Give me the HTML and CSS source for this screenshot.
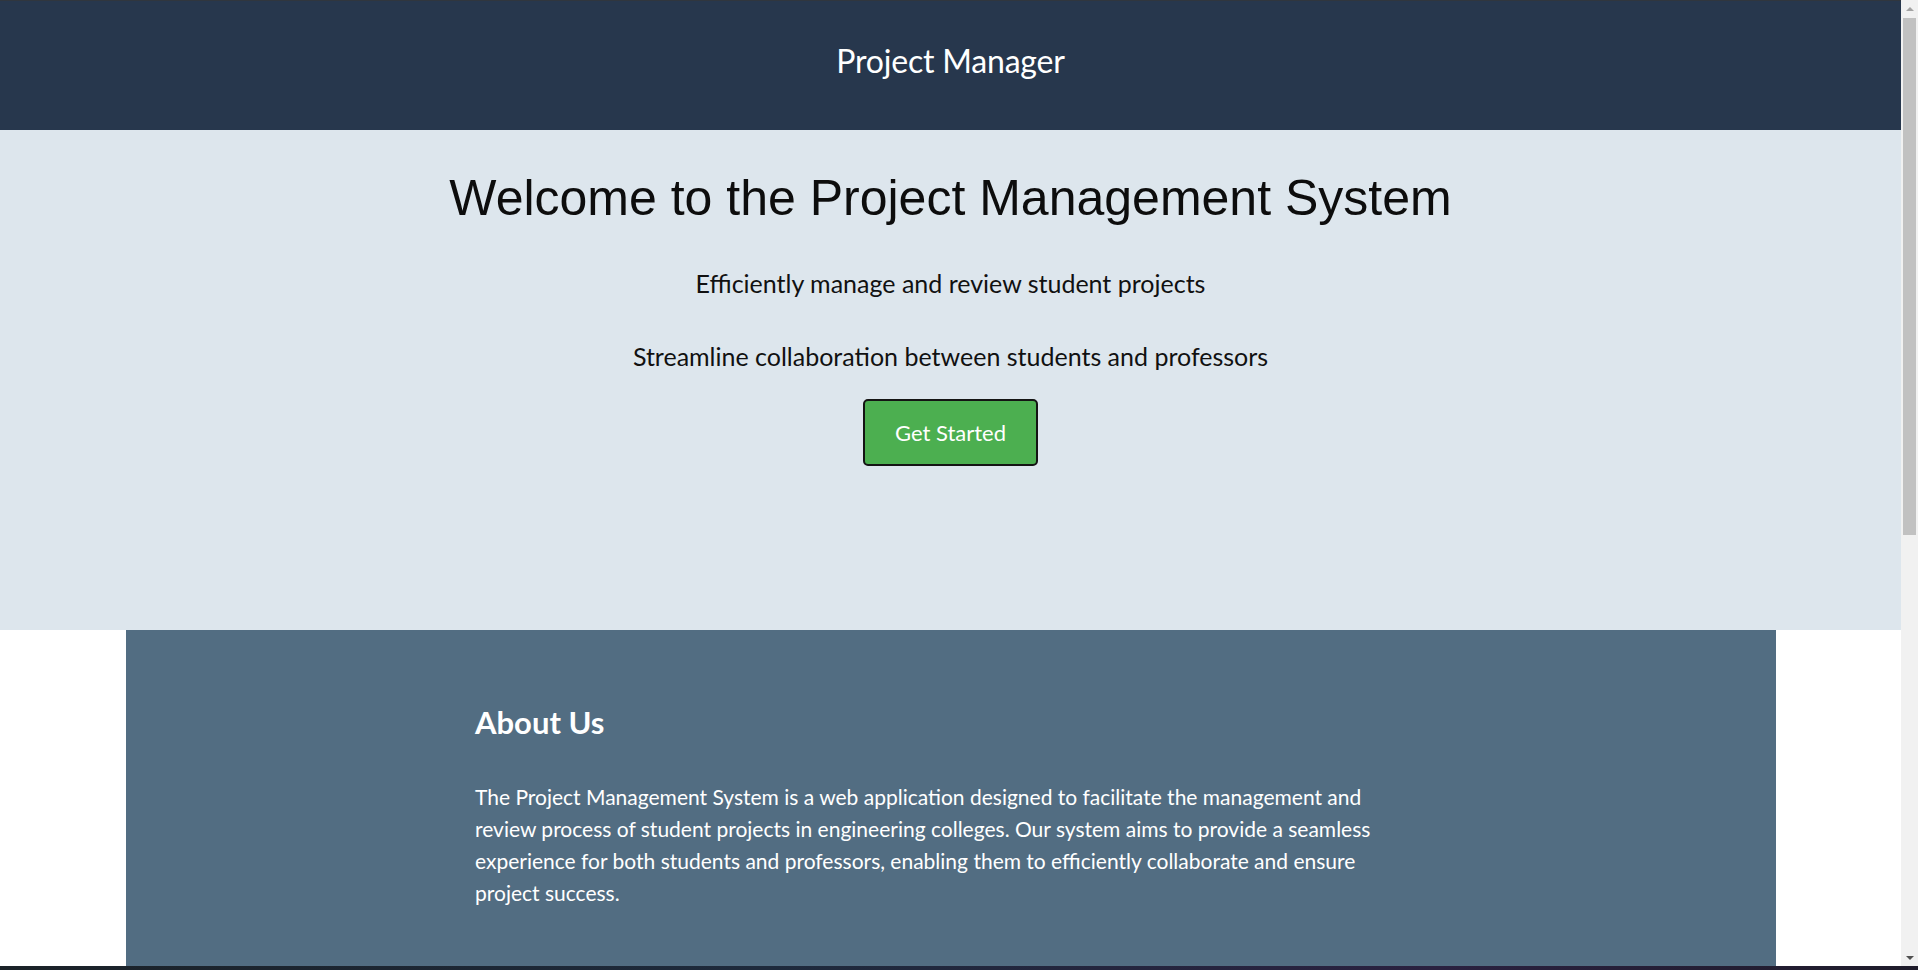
FILE: index.html
```html
<!DOCTYPE html>
<html lang="en">
<head>
<meta charset="utf-8">
<title>Project Manager</title>
<link rel="stylesheet" href="styles.css">
</head>
<body>
<div class="page">
  <header class="site-header">
    <h1 class="brand">Project Manager</h1>
  </header>
  <section class="hero">
    <h2 class="hero-title">Welcome to the Project Management System</h2>
    <p class="hero-text">Efficiently manage and review student projects</p>
    <p class="hero-text">Streamline collaboration between students and professors</p>
    <button class="btn-start" type="button">Get Started</button>
  </section>
  <section class="about">
    <div class="about-inner">
      <h2 class="about-title">About Us</h2>
      <p class="about-text">The Project Management System is a web application designed to facilitate the management and review process of student projects in engineering colleges. Our system aims to provide a seamless experience for both students and professors, enabling them to efficiently collaborate and ensure project success.</p>
    </div>
  </section>
</div>
<div class="scrollbar" aria-hidden="true">
  <span class="sb-button"><span class="sb-arrow-up"></span></span>
  <span class="sb-thumb"></span>
  <span class="sb-button sb-button-end"><span class="sb-arrow-down"></span></span>
</div>
<div class="taskbar-edge" aria-hidden="true"></div>
</body>
</html>
```
FILE: styles.css
```css
html, body {
  margin: 0;
  padding: 0;
}

body {
  margin-right: 17px;
  background: #ffffff;
  font-family: Lato, "Open Sans", sans-serif;
  color: #111111;
}

.page {
  min-height: 1735px;
}

.site-header {
  box-sizing: border-box;
  height: 130px;
  padding-top: 41px;
  background: #27374d;
  border-top: 1px solid #30363e;
  text-align: center;
}

.brand {
  margin: 0;
  font-family: Lato, sans-serif;
  font-weight: 400;
  font-size: 32px;
  line-height: 38px;
  color: #ffffff;
  letter-spacing: -0.2px;
}

.hero {
  box-sizing: border-box;
  height: 500px;
  padding-top: 39px;
  background: #dde6ed;
  text-align: center;
}

.hero-title {
  margin: 0 0 40px;
  font-family: "Liberation Sans", Arial, sans-serif;
  font-weight: 400;
  font-size: 50px;
  line-height: normal;
  color: #0d0d0d;
}

.hero-text {
  margin: 0;
  font-size: 25px;
  line-height: 32px;
  color: #111111;
}

.hero-text + .hero-text {
  margin-top: 41px;
}

.btn-start {
  display: block;
  box-sizing: border-box;
  height: 67px;
  margin: 27px auto 0;
  padding: 0 30px;
  background: #4caf50;
  border: 2px solid #141414;
  border-radius: 5px;
  color: #ffffff;
  font-family: Lato, sans-serif;
  font-size: 22px;
  cursor: pointer;
}

.about {
  max-width: 1650px;
  margin: 0 auto;
  padding: 74px 0 120px;
  background: #526d82;
  color: #ffffff;
  min-height: 700px;
  box-sizing: border-box;
}

.about-inner {
  max-width: 951px;
  margin: 0 auto;
}

.about-title {
  margin: 0 0 40px;
  font-size: 31px;
  font-weight: 700;
  line-height: 1.2;
}

.about-text {
  max-width: 925px;
  margin: 0;
  font-size: 21px;
  line-height: 32px;
}

/* browser chrome overlay: classic vertical scrollbar */
.scrollbar {
  position: fixed;
  top: 0;
  right: 0;
  width: 17px;
  height: calc(100vh - 4px);
  background: #f1f1f1;
  display: flex;
  flex-direction: column;
  align-items: stretch;
}

.sb-button {
  height: 17px;
  display: flex;
  align-items: center;
  justify-content: center;
  flex: none;
}

.sb-button-end {
  margin-top: auto;
}

.sb-arrow-up {
  width: 0;
  height: 0;
  border-left: 4px solid transparent;
  border-right: 4px solid transparent;
  border-bottom: 4px solid #a3a3a3;
}

.sb-arrow-down {
  width: 0;
  height: 0;
  border-left: 4px solid transparent;
  border-right: 4px solid transparent;
  border-top: 4px solid #505050;
}

.sb-thumb {
  flex: none;
  height: 517px;
  margin: 1px 2px 0;
  background: #c1c1c1;
}

.taskbar-edge {
  position: fixed;
  left: 0;
  right: 0;
  bottom: 0;
  height: 4px;
  background: linear-gradient(90deg, #1b2228 0%, #1e2a3c 40%, #2a2140 75%, #1f1c2b 100%);
}
```
